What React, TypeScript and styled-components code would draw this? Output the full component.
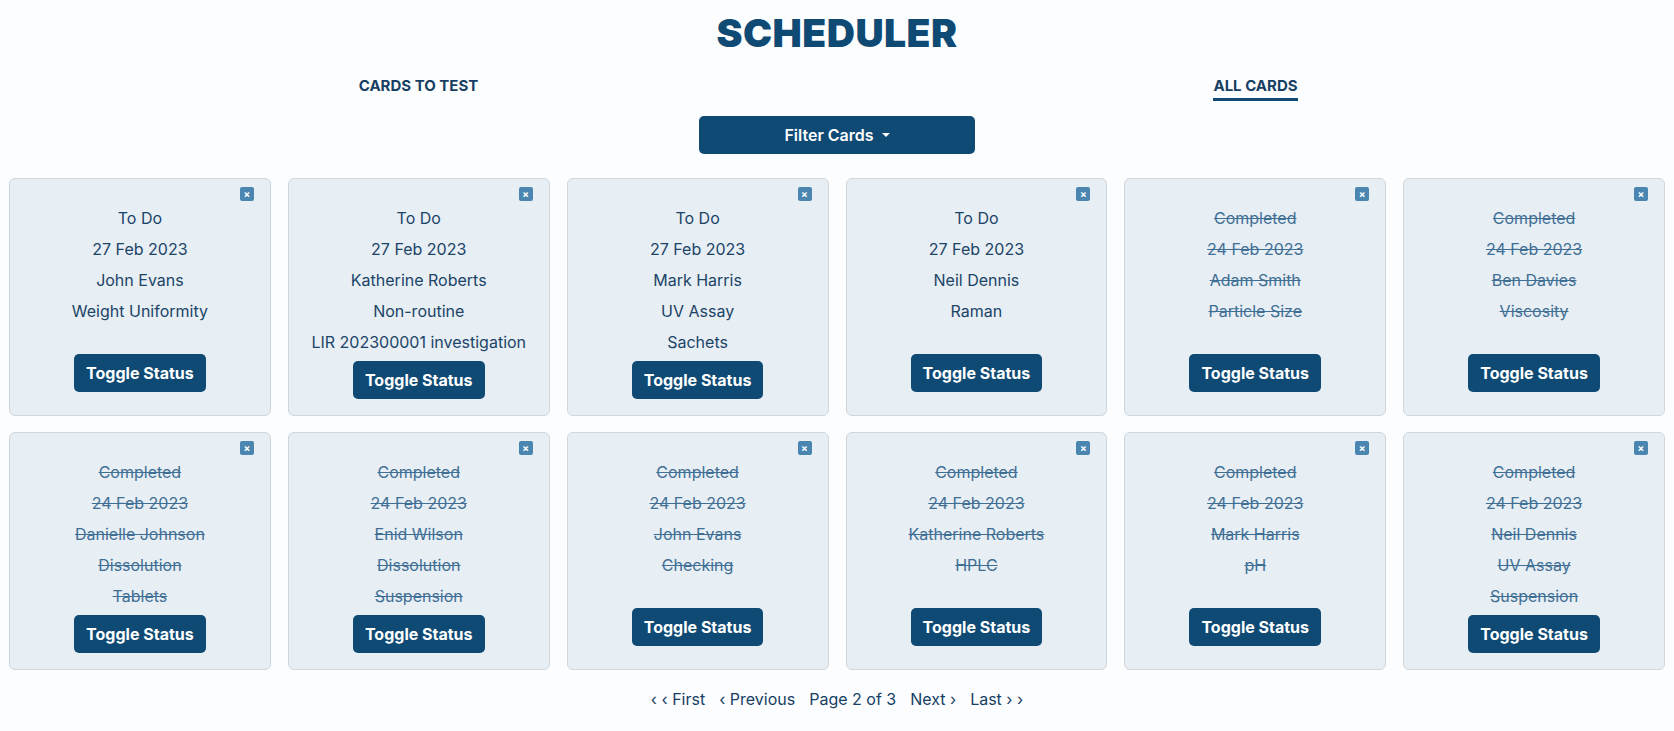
import React from "react";
import styled, { createGlobalStyle } from "styled-components";

const GlobalStyle = createGlobalStyle`
  * { box-sizing: border-box; }
  html, body { margin: 0; padding: 0; background: #fcfdfe; }
  body { font-family: Inter, "Noto Sans", sans-serif; color: #1b4467; }
`;

const Page = styled.div`
  display: flex;
  flex-direction: column;
  align-items: stretch;
  padding: 8px 8px 0;
`;

const Title = styled.h1`
  margin: 0;
  text-align: center;
  font-family: Inter, sans-serif;
  font-weight: 900;
  font-size: 39px;
  line-height: 50px;
  letter-spacing: 0.5px;
  color: #0e4a74;
`;

const Tabs = styled.div`
  display: grid;
  grid-template-columns: 1fr 1fr;
  margin-top: 18px;
  margin-left: -8px;
  margin-right: -8px;
`;

const Tab = styled.div<{ $active?: boolean }>`
  justify-self: center;
  font-weight: 700;
  font-size: 15px;
  line-height: 20px;
  color: #163f63;
  padding-bottom: 2px;
  border-bottom: 3px solid ${(p) => (p.$active ? "#0e4a74" : "transparent")};
`;

const FilterRow = styled.div`
  display: flex;
  justify-content: center;
  margin-top: 15px;
`;

const FilterButton = styled.button`
  width: 276px;
  height: 38px;
  border: none;
  border-radius: 5px;
  background: #0e4a74;
  color: #fff;
  font-family: inherit;
  font-weight: 600;
  font-size: 16px;
  display: flex;
  align-items: center;
  justify-content: center;
  gap: 8px;
`;

const Caret = styled.span`
  width: 0;
  height: 0;
  border-left: 4px solid transparent;
  border-right: 4px solid transparent;
  border-top: 4px solid #fff;
`;

const Grid = styled.div`
  display: grid;
  grid-template-columns: repeat(6, 1fr);
  column-gap: 17px;
  row-gap: 16px;
  margin-top: 24px;
  padding: 0 1px;
`;

const Card = styled.div`
  display: flex;
  flex-direction: column;
  align-items: center;
  background: #e7eef4;
  border: 1px solid #cfd6dc;
  border-radius: 6px;
  padding: 8px 16px 16px;
`;

const CardHead = styled.div`
  align-self: stretch;
  display: flex;
  justify-content: flex-end;
  height: 14px;
  margin-bottom: 5px;
`;

const CloseBtn = styled.span`
  width: 14px;
  height: 14px;
  border-radius: 2px;
  background: #4a86b0;
  color: #fff;
  font-size: 10px;
  font-weight: 700;
  line-height: 14px;
  text-align: center;
`;

const Line = styled.p<{ $done?: boolean }>`
  margin: 0 0 7px;
  font-size: 16px;
  line-height: 24px;
  white-space: nowrap;
  color: ${(p) => (p.$done ? "#3f6f94" : "#1b4467")};
  text-decoration: ${(p) => (p.$done ? "line-through" : "none")};
`;

const Spacer = styled.div`
  height: 24px;
`;

const ToggleButton = styled.button`
  height: 38px;
  padding: 0 12px;
  border: none;
  border-radius: 5px;
  background: #0e4a74;
  color: #fff;
  font-family: inherit;
  font-weight: 700;
  font-size: 16px;
`;

const Pager = styled.div`
  display: flex;
  justify-content: center;
  gap: 14px;
  margin-top: 18px;
  font-size: 16px;
  line-height: 22px;
  color: #163f63;
`;

const PagerItem = styled.span`
  white-space: nowrap;
`;

type CardData = { status: string; date: string; name: string; test: string; extra?: string };

const cards: CardData[] = [
  { status: "To Do", date: "27 Feb 2023", name: "John Evans", test: "Weight Uniformity" },
  { status: "To Do", date: "27 Feb 2023", name: "Katherine Roberts", test: "Non-routine", extra: "LIR 202300001 investigation" },
  { status: "To Do", date: "27 Feb 2023", name: "Mark Harris", test: "UV Assay", extra: "Sachets" },
  { status: "To Do", date: "27 Feb 2023", name: "Neil Dennis", test: "Raman" },
  { status: "Completed", date: "24 Feb 2023", name: "Adam Smith", test: "Particle Size" },
  { status: "Completed", date: "24 Feb 2023", name: "Ben Davies", test: "Viscosity" },
  { status: "Completed", date: "24 Feb 2023", name: "Danielle Johnson", test: "Dissolution", extra: "Tablets" },
  { status: "Completed", date: "24 Feb 2023", name: "Enid Wilson", test: "Dissolution", extra: "Suspension" },
  { status: "Completed", date: "24 Feb 2023", name: "John Evans", test: "Checking" },
  { status: "Completed", date: "24 Feb 2023", name: "Katherine Roberts", test: "HPLC" },
  { status: "Completed", date: "24 Feb 2023", name: "Mark Harris", test: "pH" },
  { status: "Completed", date: "24 Feb 2023", name: "Neil Dennis", test: "UV Assay", extra: "Suspension" },
];

export default function App() {
  return (
    <>
      <GlobalStyle />
      <Page>
        <Title>SCHEDULER</Title>
        <Tabs>
          <Tab>CARDS TO TEST</Tab>
          <Tab $active>ALL CARDS</Tab>
        </Tabs>
        <FilterRow>
          <FilterButton>
            Filter Cards <Caret />
          </FilterButton>
        </FilterRow>
        <Grid>
          {cards.map((c, i) => {
            const done = c.status === "Completed";
            return (
              <Card key={i}>
                <CardHead>
                  <CloseBtn>×</CloseBtn>
                </CardHead>
                <Line $done={done}>{c.status}</Line>
                <Line $done={done}>{c.date}</Line>
                <Line $done={done}>{c.name}</Line>
                <Line $done={done}>{c.test}</Line>
                {c.extra ? <Line $done={done}>{c.extra}</Line> : <Spacer />}
                <ToggleButton>Toggle Status</ToggleButton>
              </Card>
            );
          })}
        </Grid>
        <Pager>
          <PagerItem>‹ ‹ First</PagerItem>
          <PagerItem>‹ Previous</PagerItem>
          <PagerItem>Page 2 of 3</PagerItem>
          <PagerItem>Next ›</PagerItem>
          <PagerItem>Last › ›</PagerItem>
        </Pager>
      </Page>
    </>
  );
}
